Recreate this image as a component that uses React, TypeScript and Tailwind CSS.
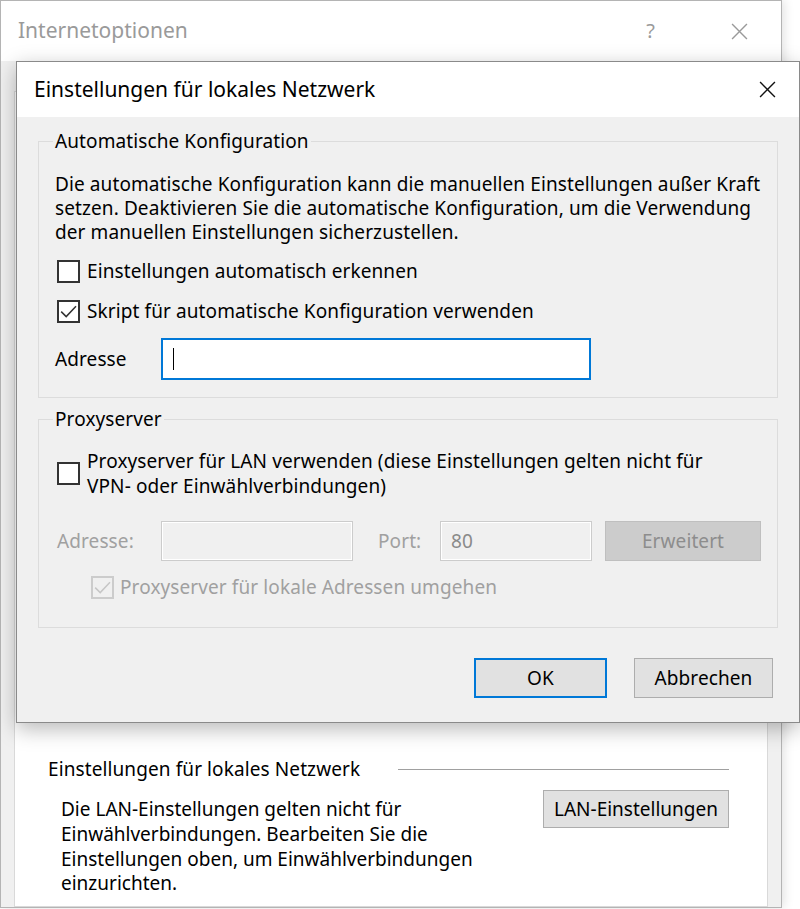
import React from "react";

function Box({ checked, disabled }: { checked?: boolean; disabled?: boolean }) {
  return (
    <span
      className={
        disabled
          ? "flex h-[23px] w-[23px] shrink-0 items-center justify-center border-2 border-[#cccccc] bg-[#f0f0f0]"
          : "flex h-[23px] w-[23px] shrink-0 items-center justify-center border-2 border-[#333333] bg-white"
      }
    >
      {checked && (
        <svg viewBox="0 0 19 19" className="h-[19px] w-[19px]">
          <path
            d="M2.2 9.6 L7.2 14.6 L17 4.2"
            fill="none"
            stroke={disabled ? "#c6c6c6" : "#333333"}
            strokeWidth="1.5"
          />
        </svg>
      )}
    </span>
  );
}

function Cross({ size, color, stroke }: { size: number; color: string; stroke: number }) {
  return (
    <svg width={size} height={size} viewBox="0 0 16 16">
      <path d="M1 1 L15 15 M15 1 L1 15" stroke={color} strokeWidth={stroke} fill="none" />
    </svg>
  );
}

export default function App() {
  return (
    <div className="relative h-[909px] w-[800px] overflow-hidden bg-white font-['Noto_Sans',sans-serif] text-black">
      {/* Background window: Internetoptionen */}
      <div className="absolute left-0 top-0 flex h-[908px] w-[782px] flex-col border border-[#b4b4b4] bg-[#f0f0f0] shadow-[2px_0_10px_rgba(0,0,0,0.12)]">
        <div className="flex h-[60px] shrink-0 items-center bg-white pl-[17px] pr-[33px]">
          <span className="text-[21px] text-[#9a9a9a]">Internetoptionen</span>
          <span className="ml-auto mr-[76px] text-[20px] text-[#9a9a9a]">?</span>
          <Cross size={17} color="#9a9a9a" stroke={1.3} />
        </div>
        <div className="flex flex-1 flex-col px-[13px]">
          <div className="mt-[30px] flex flex-1 flex-col border border-[#d9d9d9] bg-white pb-[10px] pl-[33px] pr-[38px]">
            <div className="mt-auto flex items-center">
              <span className="text-[19px] leading-[24px] tracking-[0.1px]">Einstellungen für lokales Netzwerk</span>
              <span className="ml-[38px] h-px flex-1 bg-[#a0a0a0]" />
            </div>
            <div className="mt-[16px] flex items-start">
              <p className="ml-[13px] w-[430px] text-[19px] leading-[24.7px]">
                Die LAN-Einstellungen gelten nicht für
                <br />
                Einwählverbindungen. Bearbeiten Sie die
                <br />
                Einstellungen oben, um Einwählverbindungen
                <br />
                einzurichten.
              </p>
              <button className="ml-auto mt-[-7px] h-[38px] w-[186px] border border-[#adadad] bg-[#e1e1e1] text-[19px]">
                LAN-Einstellungen
              </button>
            </div>
          </div>
        </div>
      </div>

      {/* Foreground dialog */}
      <div className="absolute left-[16px] top-[61px] flex h-[662px] w-[784px] flex-col border border-[#8a8a8a] bg-[#f0f0f0] shadow-[0_6px_20px_rgba(0,0,0,0.28)]">
        <div className="flex h-[55px] shrink-0 items-center bg-white pl-[17px] pr-[23px]">
          <span className="text-[21px]">Einstellungen für lokales Netzwerk</span>
          <span className="ml-auto">
            <Cross size={17} color="#111111" stroke={1.3} />
          </span>
        </div>

        <div className="flex flex-1 flex-col px-[21px] pt-[12px] text-[19px] leading-[24px] tracking-[0.1px]">
          {/* Automatische Konfiguration */}
          <fieldset className="border border-[#dcdcdc] pb-[17px] pl-[16px] pr-[16px]">
            <legend className="ml-[-2px] px-[2px] leading-[24px]">Automatische Konfiguration</legend>
            <p className="mt-[19px] leading-[24px]">
              Die automatische Konfiguration kann die manuellen Einstellungen außer Kraft
              <br />
              setzen. Deaktivieren Sie die automatische Konfiguration, um die Verwendung
              <br />
              der manuellen Einstellungen sicherzustellen.
            </p>
            <div className="mt-[7px] flex h-[40px] items-center gap-[7px] pl-[2px]">
              <Box />
              <span>Einstellungen automatisch erkennen</span>
            </div>
            <div className="flex h-[40px] items-center gap-[7px] pl-[2px]">
              <Box checked />
              <span>Skript für automatische Konfiguration verwenden</span>
            </div>
            <div className="mt-[7px] flex items-center">
              <span className="w-[106px]">Adresse</span>
              <div className="flex h-[42px] w-[430px] items-center border-2 border-[#0078d7] bg-white pl-[10px]">
                <span className="h-[22px] w-px bg-black" />
              </div>
            </div>
          </fieldset>

          {/* Proxyserver */}
          <fieldset className="mt-[9px] border border-[#dcdcdc] pb-[28px] pl-[16px] pr-[16px]">
            <legend className="ml-[-2px] px-[2px] leading-[24px]">Proxyserver</legend>
            <div className="mt-[18px] flex items-center gap-[7px] pl-[2px]">
              <Box />
              <span className="leading-[24.5px]">
                Proxyserver für LAN verwenden (diese Einstellungen gelten nicht für
                <br />
                VPN- oder Einwählverbindungen)
              </span>
            </div>
            <div className="mt-[23px] flex items-center text-[#a0a0a0]">
              <span className="w-[106px] pl-[2px]">Adresse:</span>
              <div className="h-[40px] w-[192px] border border-[#cccccc] bg-[#f0f0f0] shadow-[inset_0_0_0_1px_#ffffff]" />
              <span className="ml-[25px] w-[62px]">Port:</span>
              <div className="flex h-[40px] w-[152px] items-center border border-[#cccccc] bg-[#f0f0f0] pl-[10px] text-[#8a8a8a] shadow-[inset_0_0_0_1px_#ffffff]">
                80
              </div>
              <div className="ml-[13px] flex h-[40px] w-[156px] items-center justify-center border border-[#bfbfbf] bg-[#cccccc] text-[#8d8d8d]">
                Erweitert
              </div>
            </div>
            <div className="mt-[14px] flex h-[24px] items-center gap-[6px] pl-[36px] text-[#a0a0a0]">
              <Box checked disabled />
              <span>Proxyserver für lokale Adressen umgehen</span>
            </div>
          </fieldset>

          <div className="mt-[30px] flex justify-end gap-[27px] pr-[5px]">
            <button className="flex h-[40px] w-[133px] items-center justify-center border-2 border-[#0078d7] bg-[#e1e1e1]">
              OK
            </button>
            <button className="flex h-[40px] w-[139px] items-center justify-center border border-[#adadad] bg-[#e1e1e1]">
              Abbrechen
            </button>
          </div>
        </div>
      </div>
    </div>
  );
}
